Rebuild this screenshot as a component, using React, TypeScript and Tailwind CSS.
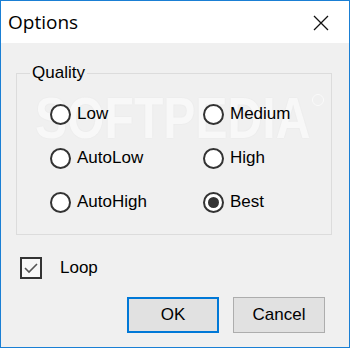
import React from "react";

const Radio = ({ label, checked }: { label: string; checked?: boolean }) => (
  <div className="flex items-center h-[44px] gap-[6px]">
    <div className="w-[21px] h-[21px] rounded-full border-[2px] border-[#333333] bg-white flex items-center justify-center shrink-0">
      {checked && <div className="w-[11px] h-[11px] rounded-full bg-[#333333]" />}
    </div>
    <span className="text-[17px] leading-[20px] text-black">{label}</span>
  </div>
);

export default function App() {
  return (
    <div
      className="relative w-[350px] h-[348px] border border-[#1a7fd4] bg-[#f0f0f0] flex flex-col overflow-hidden"
      style={{ fontFamily: '"Liberation Sans", Arial, sans-serif' }}
    >
      <div
        className="absolute left-[34px] top-[88px] z-0 text-[58px] font-bold leading-none text-[#f8f8f8] pointer-events-none select-none origin-left scale-x-[0.83]"
        style={{ textShadow: "0 0 2px rgba(0,0,0,0.05)" }}
      >
        SOFTPEDIA
      </div>
      <div className="absolute left-[311px] top-[93px] z-0 w-[12px] h-[12px] rounded-full border border-[#fafafa] pointer-events-none" />
      <div className="relative z-10 h-[42px] bg-white flex items-center justify-between pl-[7px] pr-[20px] shrink-0">
        <span className="text-[19px] text-black" style={{ fontFamily: '"Open Sans", sans-serif' }}>
          Options
        </span>
        <svg width="16" height="16" viewBox="0 0 16 16" className="mt-[1px]">
          <path d="M1 1 L15 15 M15 1 L1 15" stroke="#111" strokeWidth="1.3" fill="none" />
        </svg>
      </div>
      <div className="relative z-10 flex flex-col pl-[15px] pt-[20px]">
        <fieldset className="w-[316px] border border-[#dcdcdc] pl-[33px] pt-[9px] pb-[10px]">
          <legend className="ml-[-20px] px-[2px] text-[17px] leading-[20px] text-black bg-[#f0f0f0]">Quality</legend>
          <div className="grid grid-cols-[153px_1fr]">
            <Radio label="Low" />
            <Radio label="Medium" />
            <Radio label="AutoLow" />
            <Radio label="High" />
            <Radio label="AutoHigh" />
            <Radio label="Best" checked />
          </div>
        </fieldset>
        <div className="flex items-center gap-[18px] ml-[4px] mt-[22px] h-[22px]">
          <div className="w-[22px] h-[22px] border-[2px] border-[#333333] bg-[#f7f7f7] flex items-center justify-center">
            <svg width="16" height="14" viewBox="0 0 16 14">
              <path d="M2 7 L6 11 L14 3" stroke="#555" strokeWidth="1.6" fill="none" />
            </svg>
          </div>
          <span className="text-[17px] leading-[20px] text-black">Loop</span>
        </div>
        <div className="flex justify-end gap-[14px] pr-[24px] mt-[18px]">
          <button className="w-[92px] h-[36px] border-[2px] border-[#0078d7] bg-[#e1e1e1] text-[17px] text-black flex items-center justify-center">
            OK
          </button>
          <button className="w-[92px] h-[36px] border border-[#adadad] bg-[#e1e1e1] text-[17px] text-black flex items-center justify-center">
            Cancel
          </button>
        </div>
      </div>
    </div>
  );
}
